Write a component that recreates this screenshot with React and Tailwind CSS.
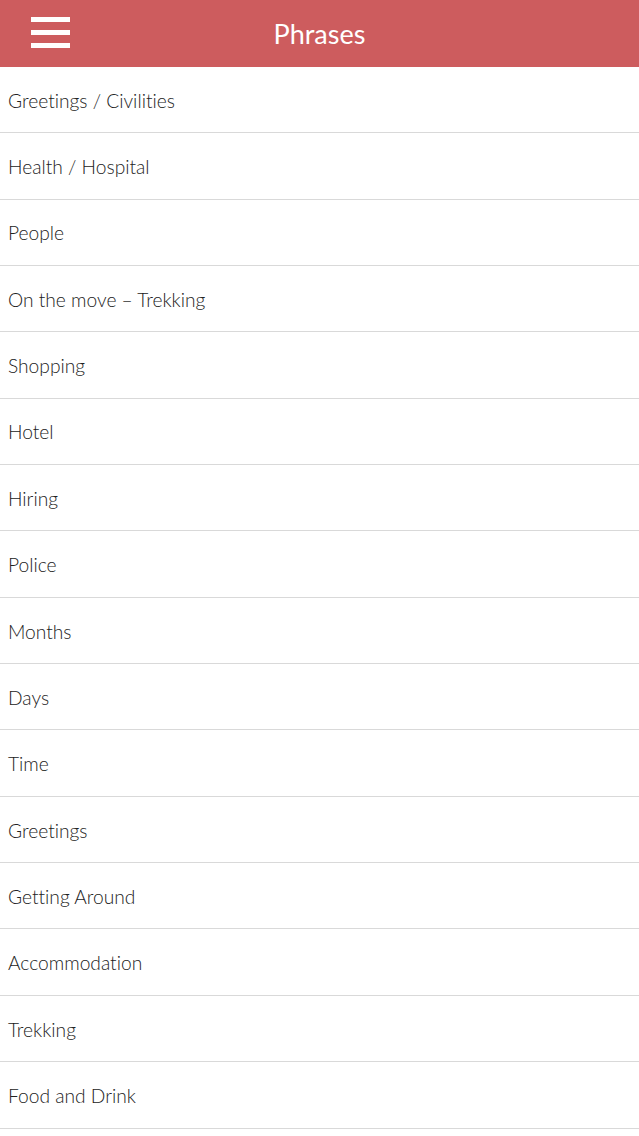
import React from "react";

const items = [
  "Greetings / Civilities",
  "Health / Hospital",
  "People",
  "On the move – Trekking",
  "Shopping",
  "Hotel",
  "Hiring",
  "Police",
  "Months",
  "Days",
  "Time",
  "Greetings",
  "Getting Around",
  "Accommodation",
  "Trekking",
  "Food and Drink",
];

export default function App() {
  return (
    <div className="w-[639px] h-[1136px] overflow-hidden bg-white" style={{ fontFamily: "Lato, 'Open Sans', sans-serif" }}>
      <div className="h-[67px] bg-[#cd5c5e] flex items-center relative">
        <div className="absolute left-[31px] top-[17px] w-[39px] flex flex-col gap-[8px]">
          <div className="h-[5px] bg-white" />
          <div className="h-[5px] bg-white" />
          <div className="h-[5px] bg-white" />
        </div>
        <div className="flex-1 text-center text-white text-[27px] leading-none pb-[1px]">Phrases</div>
      </div>
      <div className="flex flex-col">
        {items.map((t) => (
          <div key={t} className="h-[66.35px] border-b border-[#d9d9d9] flex items-center pl-[8px] pt-[3px] text-[19.2px] font-light text-[#222]" style={{ fontVariantLigatures: "none" }}>
            {t}
          </div>
        ))}
      </div>
    </div>
  );
}
